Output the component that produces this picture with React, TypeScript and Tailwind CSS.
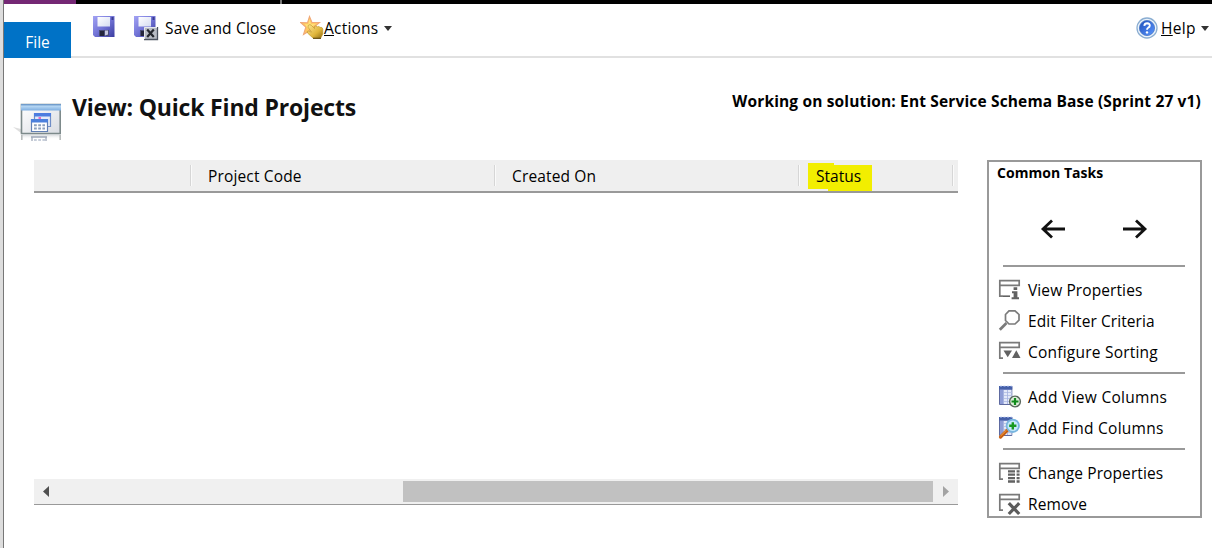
import React from "react";

function Floppy({ closing = false }: { closing?: boolean }) {
  return (
    <svg width="26" height="26" viewBox="0 0 26 26" className="shrink-0">
      <defs>
        <linearGradient id="disk" x1="0" y1="0" x2="1" y2="1">
          <stop offset="0" stopColor="#a3a3f4" />
          <stop offset="0.5" stopColor="#7274d6" />
          <stop offset="1" stopColor="#3b3ca0" />
        </linearGradient>
        <linearGradient id="paper" x1="0" y1="0" x2="1" y2="1">
          <stop offset="0" stopColor="#ffffff" />
          <stop offset="1" stopColor="#d5dcf2" />
        </linearGradient>
      </defs>
      <path d="M1 1H22.5V22H3L1 20Z" fill="url(#disk)" />
      <path d="M5.5 2H18V11.5H5.5Z" fill="url(#paper)" />
      <path d="M19.5 2h2v3h-2z" fill="#3b3c93" />
      <path d="M7 15H17V21H7Z" fill="#4a4d78" />
      <path d="M8 16h4v5H8z" fill="#24263c" />
      <path d="M13 15.5h3v4l-3 1z" fill="#c7c8df" />
      {closing && (
        <g>
          <path d="M11 12H24.5V24.5H11Z" fill="#b8bcc4" />
          <path d="M11 24.5H24.5V12" fill="none" stroke="#4c5360" strokeWidth="1.3" />
          <path d="M11.5 24V12.5H24" fill="none" stroke="#e6e8ec" />
          <path d="M14.2 14.5L20.8 22M20.8 14.5L14.2 22" stroke="#24272e" strokeWidth="2.2" />
        </g>
      )}
    </svg>
  );
}

function StarHand() {
  return (
    <svg width="26" height="26" viewBox="0 0 26 26" className="shrink-0">
      <defs>
        <linearGradient id="hand" x1="0" y1="0" x2="1" y2="1">
          <stop offset="0" stopColor="#ffe695" />
          <stop offset="0.6" stopColor="#dfb53b" />
          <stop offset="1" stopColor="#8a6914" />
        </linearGradient>
      </defs>
      <path d="M9.5 1.5L12 7.5L19.5 7.5L14 12L17 19L10 15.5L3.5 19.5L5.8 12.2L0.5 7.5L7.5 7.8Z" fill="#ffc861" stroke="#f0a878" strokeWidth="1.1" />
      <path d="M9.5 4L11 9.2L16 9L11 12L8.5 14L4.8 9.3L8.3 9.3Z" fill="#ffe27a" />
      <path d="M8.3 10.3Q10 8.8 11.5 10.5L14.5 13.5V11.5Q16 10 17.3 11.8Q19 10.8 20 12.4Q22.3 11.8 22.8 14V19L20.5 23.5H13.5L7.5 18Q6.5 16 8.5 16L11.5 17.2L8 12.2Z" fill="url(#hand)" stroke="#c39a2c" strokeWidth="0.7" />
      <path d="M13 23.3H21" stroke="#665017" strokeWidth="1.2" />
    </svg>
  );
}

function HelpBadge() {
  return (
    <svg width="22" height="22" viewBox="0 0 22 22" className="shrink-0">
      <defs>
        <linearGradient id="help" x1="0" y1="0" x2="1" y2="1">
          <stop offset="0" stopColor="#1d4dba" />
          <stop offset="1" stopColor="#5c98ff" />
        </linearGradient>
      </defs>
      <circle cx="11" cy="11" r="10" fill="#edf4fb" stroke="#8baed2" strokeWidth="1.3" />
      <circle cx="11" cy="11" r="7.6" fill="url(#help)" stroke="#4876c5" strokeWidth="0.8" />
      <path d="M8.3 8.8Q8.5 6.3 11.2 6.3Q13.9 6.4 13.8 8.6Q13.7 10 12.2 10.7Q11 11.4 11 12.8" fill="none" stroke="#fff" strokeWidth="1.9" />
      <circle cx="11" cy="15.4" r="1.2" fill="#fff" />
    </svg>
  );
}

function ViewIcon() {
  return (
    <svg width="49" height="42" viewBox="0 0 49 42" className="shrink-0">
      <defs>
        <linearGradient id="bar" x1="0" y1="0" x2="0" y2="1">
          <stop offset="0" stopColor="#5e8cc0" />
          <stop offset="0.35" stopColor="#b5d6f3" />
          <stop offset="1" stopColor="#7eaee0" />
        </linearGradient>
        <linearGradient id="pane" x1="0" y1="0" x2="1" y2="1">
          <stop offset="0" stopColor="#ffffff" />
          <stop offset="1" stopColor="#d9dce2" />
        </linearGradient>
        <linearGradient id="shine" x1="0" y1="0" x2="0" y2="1">
          <stop offset="0" stopColor="#889099" stopOpacity="0.6" />
          <stop offset="1" stopColor="#ffffff" stopOpacity="0" />
        </linearGradient>
      </defs>
      <path d="M0 27L8 29V33Z" fill="#dedede" />
      <path d="M8.5 4.5H47.2V33.5H8.5Z" fill="url(#pane)" stroke="#7d8a8b" strokeWidth="1.6" />
      <path d="M8 4H48V10.5H8Z" fill="url(#bar)" />
      <path d="M8 34.5h40v5H8z" fill="url(#shine)" opacity="0.6" />
      <path d="M8 35h1.6v5H8zM46.4 35H48v5h-1.6z" fill="#b9bdbd" />
      <path d="M21.5 13.5H37.5V26.5H21.5Z" fill="#e4ebf8" stroke="#6f8dc6" strokeWidth="1.2" />
      <path d="M21 13H38V16.5H21Z" fill="#4c7de0" />
      <path d="M25.5 17h2.5v2h-2.5z" fill="#e66bc8" />
      <path d="M18.5 19.5H34.5V31.5H18.5Z" fill="#fff" stroke="#6280b5" strokeWidth="1.2" />
      <path d="M18 19H35V22.5H18Z" fill="#4c80dc" />
      <path d="M21 25.3h11M21 28.5h11" stroke="#8ca0bd" strokeWidth="2" strokeDasharray="2.8 1.4" />
      <path d="M18 37h16M19 37v4M33 37v4" stroke="#8995a9" strokeWidth="1.3" fill="none" opacity="0.8" />
      <path d="M21 40h11" stroke="#b6c0cf" strokeWidth="1.3" strokeDasharray="2.8 1.4" />
    </svg>
  );
}

type Kind = "info" | "filter" | "sort" | "addview" | "addfind" | "change" | "remove";

function Sheet() {
  return (
    <g>
      <path d="M1.5 1.5H13.8V19.5H1.5Z" fill="#8e9cd6" stroke="#5e6aa0" />
      <path d="M1 1H14.3V4.5H1Z" fill="#4660a8" />
      <path d="M2 1.3h12" stroke="#8ea4dd" strokeDasharray="2 1.5" />
      <path d="M5.5 5h8v14h-8z" fill="#e3e8f8" />
      <path d="M5.5 7.5h8M5.5 10.5h8M5.5 13.5h8M5.5 16.5h8" stroke="#b9c4e8" />
      <path d="M5.5 5v14M9.5 5v14" stroke="#a3b0dd" strokeWidth="0.8" />
    </g>
  );
}

function TaskIcon({ kind }: { kind: Kind }) {
  const framed = kind === "info" || kind === "sort" || kind === "change" || kind === "remove";
  return (
    <svg width="24" height="24" viewBox="0 0 24 24" className="shrink-0">
      {framed && (
        <path d="M1.8 2.6H21.2V7.4H1.8ZM1.8 7V18.2H5" fill="none" stroke="#797979" strokeWidth="1.7" />
      )}
      {kind === "info" && (
        <g fill="#626262">
          <path d="M5 17.4h7v1.6H5z" />
          <path d="M15.6 9.3h3.6v2.8h-3.6zM14 13.2h5.4v6h1.6v2.1h-7.4v-2.1h2v-3.9H14z" />
        </g>
      )}
      {kind === "filter" && (
        <g fill="none" stroke="#7b7b7b">
          <path d="M11 1.8H17L21 5.5V11.2L17 15H11L7.5 11.5V5.5Z" strokeWidth="1.7" />
          <path d="M8.5 14L1.8 20.8" strokeWidth="2.7" />
        </g>
      )}
      {kind === "sort" && (
        <g fill="#626262">
          <path d="M5.5 10.5H14L9.7 17.3Z" />
          <path d="M14 18L18.3 10.3L22.5 18Z" />
        </g>
      )}
      {kind === "change" && (
        <g fill="none" stroke="#626262">
          <path d="M10 10.3h7M10 13.7h7M10 17.1h7M10 20.5h7" strokeWidth="2.3" />
          <path d="M18.6 10.3h3M18.6 13.7h3M18.6 17.1h3M18.6 20.5h3" strokeWidth="2.3" />
        </g>
      )}
      {kind === "remove" && (
        <path d="M10.8 11.2L21.2 22M21.2 11.2L10.8 22" stroke="#5c5c5c" strokeWidth="3.2" />
      )}
      {kind === "addview" && (
        <g>
          <Sheet />
          <circle cx="17" cy="16.5" r="5.4" fill="#dcefd8" stroke="#59665c" strokeWidth="1.4" />
          <path d="M17 13v7M13.5 16.5h7" stroke="#118b1b" strokeWidth="2.2" />
        </g>
      )}
      {kind === "addfind" && (
        <g>
          <Sheet />
          <path d="M9.5 14L2.5 21" stroke="#c85f12" strokeWidth="3.2" strokeLinecap="round" />
          <path d="M8.6 14L2.5 20" stroke="#f3a64a" strokeWidth="1" />
          <circle cx="14.8" cy="9.8" r="6.2" fill="#c4e8fa" stroke="#78b5df" strokeWidth="1.8" />
          <path d="M14.8 6.2v7.2M11.2 9.8h7.2" stroke="#17991e" strokeWidth="2.4" />
        </g>
      )}
    </svg>
  );
}

function Task({ kind, label, tracking }: { kind: Kind; label: string; tracking: string }) {
  return (
    <li className="flex h-[31px] shrink-0 items-center pl-[9px]">
      <TaskIcon kind={kind} />
      <span className={`ml-[6px] ${tracking}`}>{label}</span>
    </li>
  );
}

function Rule() {
  return <div className="mr-[15px] ml-[14px] h-[2px] shrink-0 bg-[#999999]" />;
}

function Caret() {
  return (
    <svg width="8" height="5" viewBox="0 0 8 5" className="shrink-0">
      <path d="M0 0H8L4 5Z" fill="#333" />
    </svg>
  );
}

function HeaderCell({ className, children }: { className: string; children?: React.ReactNode }) {
  return (
    <div className={`flex h-full shrink-0 items-center ${className}`}>
      <div className="flex-1 pl-[16px]">{children}</div>
      <div className="h-[21px] w-[2px] border-l border-[#d6d6d6] bg-[#fafafa]" />
    </div>
  );
}

export default function App() {
  return (
    <div className="flex h-[548px] w-[1212px] overflow-hidden bg-white font-['Open_Sans','Noto_Sans',sans-serif] text-[15.5px] leading-[22px] font-[385] whitespace-nowrap text-black">
      <div className="w-[4px] shrink-0 border-r border-[#777777] bg-[#dddddd]" />
      <div className="flex min-w-0 flex-1 flex-col">
        <div className="flex h-[4px] shrink-0 bg-black">
          <div className="w-[72px] bg-[#742774]" />
          <div className="ml-[204px] w-[2px] bg-[#777777]" />
        </div>

        <header className="flex h-[54px] shrink-0">
          <div className="mt-[18px] flex h-[36px] w-[67px] items-center justify-center bg-[#0072c6] pt-[4px] text-white">
            File
          </div>
          <div className="flex flex-1 items-center border-b-2 border-[#e1e1e1] pb-[4px]">
            <div className="ml-[21px] flex"><Floppy /></div>
            <div className="ml-[15px] flex items-center">
              <Floppy closing />
              <span className="ml-[6px] w-[135px] tracking-[0.2px]">Save and Close</span>
            </div>
            <div className="flex items-center">
              <StarHand />
              <span className="-ml-[2px] w-[60px] tracking-[0.22px]"><u>A</u>ctions</span>
              <Caret />
            </div>
            <div className="ml-auto flex items-center pr-[3px]">
              <HelpBadge />
              <span className="ml-[3px] w-[40px] tracking-[0.3px]"><u>H</u>elp</span>
              <Caret />
            </div>
          </div>
        </header>

        <div className="flex h-[102px] shrink-0">
          <div className="mt-[42px] ml-[9px] flex"><ViewIcon /></div>
          <h1 className="mt-[33px] ml-[10px] text-[23px] leading-[32px] font-bold tracking-[-0.18px] text-[#111111]">
            View: Quick Find Projects
          </h1>
          <div className="mt-[32px] mr-[11px] ml-auto text-[15.5px] font-bold tracking-[0.15px]">
            Working on solution: Ent Service Schema Base (Sprint 27 v1)
          </div>
        </div>

        <main className="flex pl-[30px]">
          <section className="flex h-[345px] w-[924px] shrink-0 flex-col border-b border-[#999999]">
            <div className="flex h-[33px] shrink-0 border-b-2 border-[#999999] bg-[#efefef]">
              <HeaderCell className="w-[158px]" />
              <HeaderCell className="w-[304px]"><span className="tracking-[0.15px]">Project Code</span></HeaderCell>
              <HeaderCell className="w-[304px]"><span className="tracking-[0.15px]">Created On</span></HeaderCell>
              <div className="flex h-full w-[154px] items-center">
                <div className="ml-[8px] flex h-[29px] flex-1">
                  <div className="relative h-[27px] w-[64px]">
                    <svg width="64" height="28" viewBox="0 0 64 28" className="absolute top-[2px] left-0">
                      <path d="M0 0H26V2H64V28H20V26H0Z" fill="#f2ee00" />
                    </svg>
                    <span className="relative block pt-[4px] pl-[8px]">Status</span>
                  </div>
                </div>
                <div className="h-[21px] w-[2px] border-l border-[#d6d6d6] bg-[#fafafa]" />
              </div>
            </div>
            <div className="mt-auto flex h-[25px] items-center bg-[#f0f0f0]">
              <svg width="25" height="25" viewBox="0 0 25 25">
                <path d="M9 12.5L15 7V18Z" fill="#505050" />
              </svg>
              <div className="ml-[344px] h-[21px] w-[530px] bg-[#c1c1c1]" />
              <svg width="25" height="25" viewBox="0 0 25 25">
                <path d="M16 12.5L10 7V18Z" fill="#a3a3a3" />
              </svg>
            </div>
          </section>

          <aside className="ml-[29px] flex h-[358px] w-[215px] shrink-0 flex-col overflow-hidden border-2 border-[#999999]">
            <h2 className="h-[22px] shrink-0 pl-[8px] text-[14px] font-bold tracking-[0.05px]">Common Tasks</h2>
            <div className="flex h-[81px] shrink-0 items-center pt-[9px] pl-[51px]">
              <svg width="26" height="20" viewBox="0 0 26 20" fill="none" stroke="#111" strokeWidth="2.8">
                <path d="M25 10H3M12 1.5L3 10L12 18.5" />
              </svg>
              <svg width="26" height="20" viewBox="0 0 26 20" fill="none" stroke="#111" strokeWidth="2.8" className="ml-[56px]">
                <path d="M1 10H23M14 1.5L23 10L14 18.5" />
              </svg>
            </div>
            <Rule />
            <ul className="mt-[7px] mb-[5px] shrink-0">
              <Task kind="info" label="View Properties" tracking="tracking-[0.1px]" />
              <Task kind="filter" label="Edit Filter Criteria" tracking="tracking-[0.08px]" />
              <Task kind="sort" label="Configure Sorting" tracking="tracking-[0.22px]" />
            </ul>
            <Rule />
            <ul className="mt-[7px] mb-[5px] shrink-0">
              <Task kind="addview" label="Add View Columns" tracking="tracking-[0.3px]" />
              <Task kind="addfind" label="Add Find Columns" tracking="tracking-[0.26px]" />
            </ul>
            <Rule />
            <ul className="mt-[7px] shrink-0">
              <Task kind="change" label="Change Properties" tracking="tracking-[0.1px]" />
              <Task kind="remove" label="Remove" tracking="tracking-[0.1px]" />
            </ul>
          </aside>
        </main>
      </div>
    </div>
  );
}
